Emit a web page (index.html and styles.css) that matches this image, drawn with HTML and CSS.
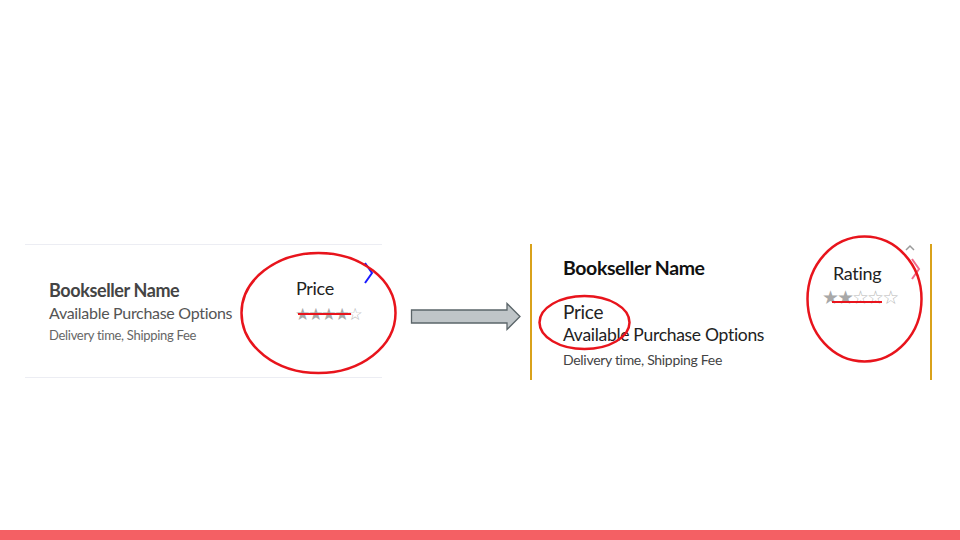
FILE: index.html
```html
<!DOCTYPE html>
<html>
<head>
<meta charset="utf-8">
<link rel="stylesheet" href="styles.css">
</head>
<body>
<div class="slide">
  <div class="row">
    <div class="card-old">
      <div class="info">
        <div class="name">Bookseller Name</div>
        <div class="options">Available Purchase Options</div>
        <div class="delivery">Delivery time, Shipping Fee</div>
      </div>
      <div class="side">
        <div class="price">Price</div>
        <div class="stars">★★★★<span class="empty">☆</span></div>
      </div>
      <svg class="chev-blue" width="12" height="22" viewBox="0 0 12 22"><path d="M2 1 L9 11 L2 21" fill="none" stroke="#1a1aff" stroke-width="2"/></svg>
    </div>
    <svg class="arrow" width="112" height="30" viewBox="0 0 112 30"><path d="M1.5 8 L97 8 L97 1.5 L110 14.5 L97 27.5 L97 21 L1.5 21 Z" fill="#bfc5c8" stroke="#5b6569" stroke-width="1.3"/></svg>
    <div class="card-new">
      <div class="info2">
        <div class="name2">Bookseller Name</div>
        <div class="price2">Price</div>
        <div class="options2">Available Purchase Options</div>
        <div class="delivery2">Delivery time, Shipping Fee</div>
      </div>
      <div class="side2">
        <div class="rating">Rating</div>
        <div class="stars2">★★<span class="empty">☆☆☆</span></div>
      </div>
      <div class="ctrl">
        <svg class="caret" width="10" height="7" viewBox="0 0 10 7"><path d="M1 6 L5 2 L9 6" fill="none" stroke="#9a9a9a" stroke-width="1.5"/></svg>
        <svg class="chev-pink" width="12" height="22" viewBox="0 0 12 22"><path d="M2 1 L9 11 L2 21" fill="none" stroke="#f06a8a" stroke-width="2"/></svg>
      </div>
    </div>
  </div>
  <svg class="notes" width="960" height="540" viewBox="0 0 960 540">
    <ellipse cx="318.5" cy="313" rx="77" ry="60" fill="none" stroke="#e8141c" stroke-width="2.5"/>
    <line x1="298" y1="314" x2="351" y2="314" stroke="#e8141c" stroke-width="2"/>
    <ellipse cx="584.5" cy="322.5" rx="45" ry="26.5" fill="none" stroke="#e8141c" stroke-width="2.5"/>
    <ellipse cx="864.5" cy="299" rx="57" ry="62.5" fill="none" stroke="#e8141c" stroke-width="2.5"/>
    <line x1="832" y1="302" x2="882" y2="302" stroke="#e8141c" stroke-width="2"/>
  </svg>
  <div class="bar"></div>
</div>
</body>
</html>
```
FILE: styles.css
```css
html, body {
  margin: 0;
  padding: 0;
  background: #fff;
}
.slide {
  position: relative;
  width: 960px;
  height: 540px;
  overflow: hidden;
  font-family: "Lato", "Open Sans", sans-serif;
  display: flex;
  flex-direction: column;
}
.row {
  display: flex;
  align-items: flex-start;
  padding-top: 244px;
  flex: 1;
}
.card-old {
  margin-left: 25px;
  width: 357px;
  height: 134px;
  border-top: 1.5px solid #ecedf3;
  border-bottom: 1.5px solid #ecedf3;
  display: flex;
  align-items: flex-start;
  box-sizing: border-box;
}
.info {
  width: 247px;
  padding-left: 24px;
  padding-top: 34px;
}
.name {
  font-size: 18px;
  font-weight: 700;
  line-height: 22px;
  color: #444;
  letter-spacing: -0.4px;
}
.options {
  font-size: 16px;
  line-height: 23px;
  color: #555;
  letter-spacing: -0.3px;
}
.delivery {
  font-size: 13px;
  line-height: 22px;
  color: #666;
  letter-spacing: -0.3px;
}
.side {
  width: 64px;
  padding-top: 32px;
}
.price {
  font-size: 18px;
  line-height: 22px;
  color: #222;
  letter-spacing: -0.3px;
}
.stars {
  margin-top: 6px;
  margin-left: -1px;
  font-family: "DejaVu Sans", sans-serif;
  font-size: 17px;
  line-height: 18px;
  color: #a8a8a8;
  letter-spacing: -2.1px;
  white-space: nowrap;
}
.empty {
  color: #b8b8b8;
}
.chev-blue {
  margin-left: 3px;
  margin-top: 17px;
}
.arrow {
  margin-left: 28px;
  margin-top: 58px;
}
.card-new {
  margin-left: 8px;
  width: 402px;
  height: 136px;
  border-left: 2px solid #d9a21b;
  border-right: 2px solid #d9a21b;
  box-sizing: border-box;
  display: flex;
  align-items: flex-start;
}
.info2 {
  width: 261px;
  padding-left: 31px;
  padding-top: 13px;
}
.name2 {
  font-size: 19.5px;
  font-weight: 700;
  line-height: 22px;
  color: #111;
  letter-spacing: -0.4px;
}
.price2 {
  margin-top: 21px;
  font-size: 19px;
  line-height: 24px;
  color: #222;
  letter-spacing: -0.3px;
}
.options2 {
  font-size: 17.5px;
  line-height: 22px;
  color: #222;
  letter-spacing: -0.3px;
}
.delivery2 {
  margin-top: 4px;
  font-size: 14px;
  line-height: 20px;
  color: #444;
  letter-spacing: -0.3px;
}
.side2 {
  width: 82px;
  padding-top: 18px;
}
.rating {
  padding-left: 9px;
  font-size: 18px;
  line-height: 22px;
  color: #222;
  letter-spacing: -0.3px;
}
.stars2 {
  margin-top: 3px;
  margin-left: -2px;
  font-family: "DejaVu Sans", sans-serif;
  font-size: 19px;
  line-height: 20px;
  color: #a8a8a8;
  letter-spacing: -2px;
  white-space: nowrap;
}
.ctrl {
  display: flex;
  flex-direction: column;
  margin-left: -1px;
}
.caret {
  margin-top: 0;
}
.chev-pink {
  margin-left: 5px;
  margin-top: 7px;
}
.notes {
  position: absolute;
  left: 0;
  top: 0;
  pointer-events: none;
}
.bar {
  height: 10px;
  background: #f46064;
}
```
